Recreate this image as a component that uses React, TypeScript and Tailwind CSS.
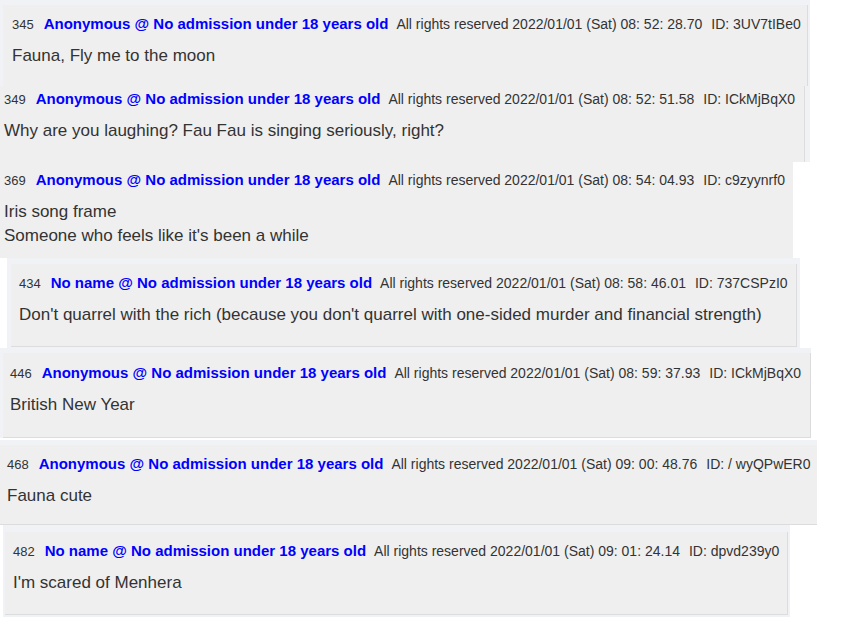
import React from "react";

type PostProps = {
  outer: string;
  inner: string;
  text: string;
  num: string;
  name: string;
  meta: string;
  id: string;
  lines: string[];
};

function Post({ outer, inner, text, num, name, meta, id, lines }: PostProps) {
  return (
    <div className={"bg-[#f1f2f6] box-border " + outer}>
      <div className={"bg-[#efefef] box-border border-[#dcdcdc] " + inner}>
        <div className={text}>
          <div className="flex items-baseline whitespace-nowrap leading-[20px] h-[20px]">
            <span className="text-[13px] text-[#333]">{num}</span>
            <span className="ml-[10px] text-[15px] font-bold text-[#0000ff]">{name}</span>
            <span className="ml-[8px] text-[14px] text-[#333]">{meta}</span>
            <span className="ml-[9px] text-[14px] text-[#333]">{id}</span>
          </div>
          <div className="mt-[10px] text-[17px] leading-[24px] text-[#333] whitespace-nowrap">
            {lines.map((l, i) => (
              <div key={i}>{l}</div>
            ))}
          </div>
        </div>
      </div>
    </div>
  );
}

export default function App() {
  const name = "No admission under 18 years old";
  return (
    <div
      className="w-[853px] h-[624px] bg-white overflow-hidden"
      style={{ fontFamily: '"Liberation Sans", Arial, sans-serif' }}
    >
      <Post
        outer="w-[810px] h-[86px] pt-[5px] pl-[3px]"
        inner="w-[805px] h-[81px] border-r"
        text="pl-[9px] pt-[9px]"
        num="345"
        name={"Anonymous @ " + name}
        meta="All rights reserved 2022/01/01 (Sat) 08: 52: 28.70"
        id="ID: 3UV7tIBe0"
        lines={["Fauna, Fly me to the moon"]}
      />
      <Post
        outer="w-[810px] h-[76px]"
        inner="w-[805px] h-[76px] border-r"
        text="pl-[4px] pt-[3px]"
        num="349"
        name={"Anonymous @ " + name}
        meta="All rights reserved 2022/01/01 (Sat) 08: 52: 51.58"
        id="ID: ICkMjBqX0"
        lines={["Why are you laughing? Fau Fau is singing seriously, right?"]}
      />
      <Post
        outer="w-[793px] h-[96px]"
        inner="w-[793px] h-[96px]"
        text="pl-[4px] pt-[8px]"
        num="369"
        name={"Anonymous @ " + name}
        meta="All rights reserved 2022/01/01 (Sat) 08: 54: 04.93"
        id="ID: c9zyynrf0"
        lines={["Iris song frame", "Someone who feels like it's been a while"]}
      />
      <Post
        outer="ml-[7px] w-[793px] h-[90px] pt-[6px] pl-[4px]"
        inner="w-[786px] h-[83px] border-r border-b"
        text="pl-[8px] pt-[9px]"
        num="434"
        name={"No name @ " + name}
        meta="All rights reserved 2022/01/01 (Sat) 08: 58: 46.01"
        id="ID: 737CSPzI0"
        lines={[
          "Don't quarrel with the rich (because you don't quarrel with one-sided murder and financial strength)",
        ]}
      />
      <Post
        outer="w-[811px] h-[90px] pt-[5px] pl-[3px] mb-[2px]"
        inner="w-[808px] h-[85px] border-r border-b"
        text="pl-[7px] pt-[10px]"
        num="446"
        name={"Anonymous @ " + name}
        meta="All rights reserved 2022/01/01 (Sat) 08: 59: 37.93"
        id="ID: ICkMjBqX0"
        lines={["British New Year"]}
      />
      <Post
        outer="w-[817px] h-[85px] pt-[5px]"
        inner="w-[817px] h-[80px] border-b"
        text="pl-[7px] pt-[9px]"
        num="468"
        name={"Anonymous @ " + name}
        meta="All rights reserved 2022/01/01 (Sat) 09: 00: 48.76"
        id="ID: / wyQPwER0"
        lines={["Fauna cute"]}
      />
      <Post
        outer="ml-[3px] w-[787px] h-[92px] pt-[7px] pl-[2px]"
        inner="w-[783px] h-[83px] border-r border-b"
        text="pl-[8px] pt-[9px]"
        num="482"
        name={"No name @ " + name}
        meta="All rights reserved 2022/01/01 (Sat) 09: 01: 24.14"
        id="ID: dpvd239y0"
        lines={["I'm scared of Menhera"]}
      />
    </div>
  );
}
